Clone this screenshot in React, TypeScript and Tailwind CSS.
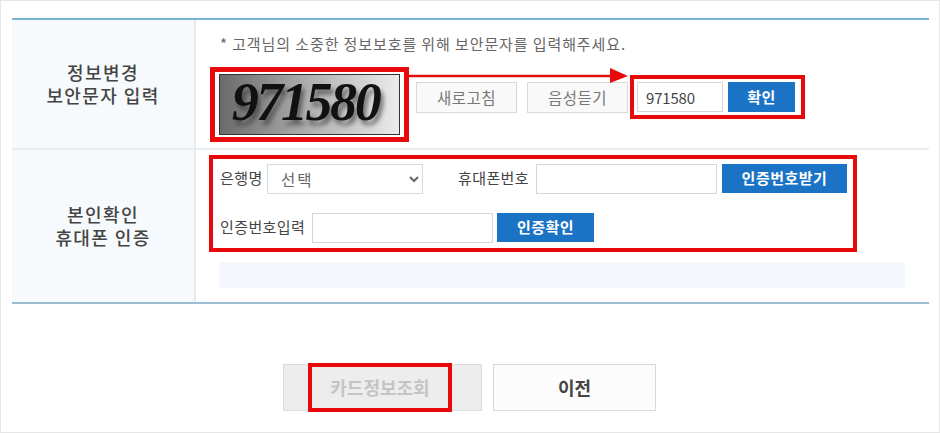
const font = "font-['Noto_Sans_CJK_KR','Noto_Sans',sans-serif]";

const GrayButton = ({ label }: { label: string }) => (
  <button className="h-[31px] w-[101px] border border-[#d9d9d9] bg-[#f9f9f9] text-[15.5px] tracking-[0.5px] text-[#777]">
    {label}
  </button>
);

const BlueButton = ({ label, className }: { label: string; className: string }) => (
  <button className={`bg-[#1a73c5] text-[15px] font-bold tracking-[0.5px] text-white ${className}`}>
    {label}
  </button>
);

const Input = ({ className, value }: { className: string; value?: string }) => (
  <input
    readOnly
    value={value ?? ""}
    className={`h-[30px] border border-[#d5d5d5] bg-white px-2 text-[15px] text-[#444] outline-none ${className}`}
  />
);

const Captcha = () => (
  <div className="flex h-[75px] w-[199px] items-center justify-center border-[5px] border-[#e80a0a] px-[4px] py-[2px]">
    <div className="flex h-full w-full items-center justify-center border border-[#333] bg-gradient-to-r from-[#6a6a6a] via-[#b0b0b0] to-[#ececec]">
      <span className="-ml-[8px] -mt-[5px] font-['Liberation_Serif',serif] text-[54px] font-bold italic leading-[50px] tracking-[-2.4px] text-[#111] [text-shadow:3px_5px_4px_rgba(40,40,40,0.55)]">
        971580
      </span>
    </div>
  </div>
);

const RowHead = ({ lines }: { lines: string[] }) => (
  <div className="flex w-[184px] shrink-0 flex-col items-center justify-center border-r-2 border-[#e3eaf0] bg-[#f7fafc] text-[18px] font-medium leading-[23px] tracking-[1.4px] text-[#444]">
    {lines.map((l) => (
      <div key={l}>{l}</div>
    ))}
  </div>
);

export default function App() {
  return (
    <div className={`${font} h-[433px] w-[940px] overflow-hidden border border-[#e6e6e6] bg-white`}>
      <div className="ml-[11px] mt-[17px] w-[917px] border-t-2 border-[#7eb3d8]">
        {/* security text */}
        <div className="flex h-[130px] border-b-2 border-[#e9edf0]">
          <RowHead lines={["정보변경", "보안문자 입력"]} />
          <div className="pl-[14px]">
            <p className="ml-[10px] mt-[14px] text-[15px] leading-[20px] tracking-[0.9px] text-[#666]">
              * 고객님의 소중한 정보보호를 위해 보안문자를 입력해주세요.
            </p>
            <div className="relative mt-[13px] flex items-start">
              <Captcha />
              <div className="ml-[7px] mt-[15px] flex gap-[10px]">
                <GrayButton label="새로고침" />
                <GrayButton label="음성듣기" />
              </div>
              <div className="ml-[2px] mt-[8px] flex h-[44px] w-[175px] items-start gap-[5px] border-[4px] border-[#e80a0a] pl-[3px] pt-[3px]">
                <Input className="w-[86px] tracking-[-0.2px]" value="971580" />
                <BlueButton label="확인" className="h-[30px] w-[67px]" />
              </div>
              {/* annotation arrow */}
              <svg className="absolute left-[199px] top-[-2px]" width="222" height="24" viewBox="0 0 222 24">
                <path d="M0 11H205" stroke="#e01010" strokeWidth="2.5" />
                <path d="M201 3L219 11L201 18Z" fill="#e80a0a" />
              </svg>
            </div>
          </div>
        </div>

        {/* phone auth */}
        <div className="flex h-[154px] border-b-2 border-[#9dbdd4]">
          <RowHead lines={["본인확인", "휴대폰 인증"]} />
          <div className="pl-[13px] pt-[5px]">
            <div className="h-[97px] w-[648px] border-[4px] border-[#e80a0a] pl-[7px] pt-[5px] text-[15px] tracking-[0.4px] text-[#444]">
              <div className="flex items-start">
                <span className="w-[47px] leading-[28px]">은행명</span>
                <select className="h-[30px] w-[156px] border border-[#d9d9d9] bg-white pl-[9px] text-[15.5px] tracking-[2px] text-[#666] outline-none">
                  <option>선택</option>
                </select>
                <span className="ml-[35px] w-[78px] leading-[28px]">휴대폰번호</span>
                <Input className="w-[181px]" />
                <BlueButton label="인증번호받기" className="ml-[5px] h-[29px] w-[125px]" />
              </div>
              <div className="mt-[19px] flex items-start">
                <span className="w-[92px] leading-[28px]">인증번호입력</span>
                <Input className="w-[181px]" />
                <BlueButton label="인증확인" className="ml-[4px] h-[29px] w-[97px]" />
              </div>
            </div>
            <div className="ml-[10px] mt-[10px] h-[26px] w-[686px] bg-[#f4f8fc]" />
          </div>
        </div>
      </div>

      {/* bottom buttons */}
      <div className="ml-[282px] mt-[60px] flex gap-[11px]">
        <div className="flex h-[47px] w-[199px] items-center border border-[#dcdcdc] bg-[#ededed]">
          <button className="ml-[24px] h-[49px] w-[144px] shrink-0 border-[4px] border-[#e80a0a] text-[18px] font-bold text-[#c4c4c4]">
            카드정보조회
          </button>
        </div>
        <button className="h-[47px] w-[163px] border border-[#d9d9d9] bg-[#fcfcfc] text-[18px] font-bold text-[#444]">
          이전
        </button>
      </div>
    </div>
  );
}
